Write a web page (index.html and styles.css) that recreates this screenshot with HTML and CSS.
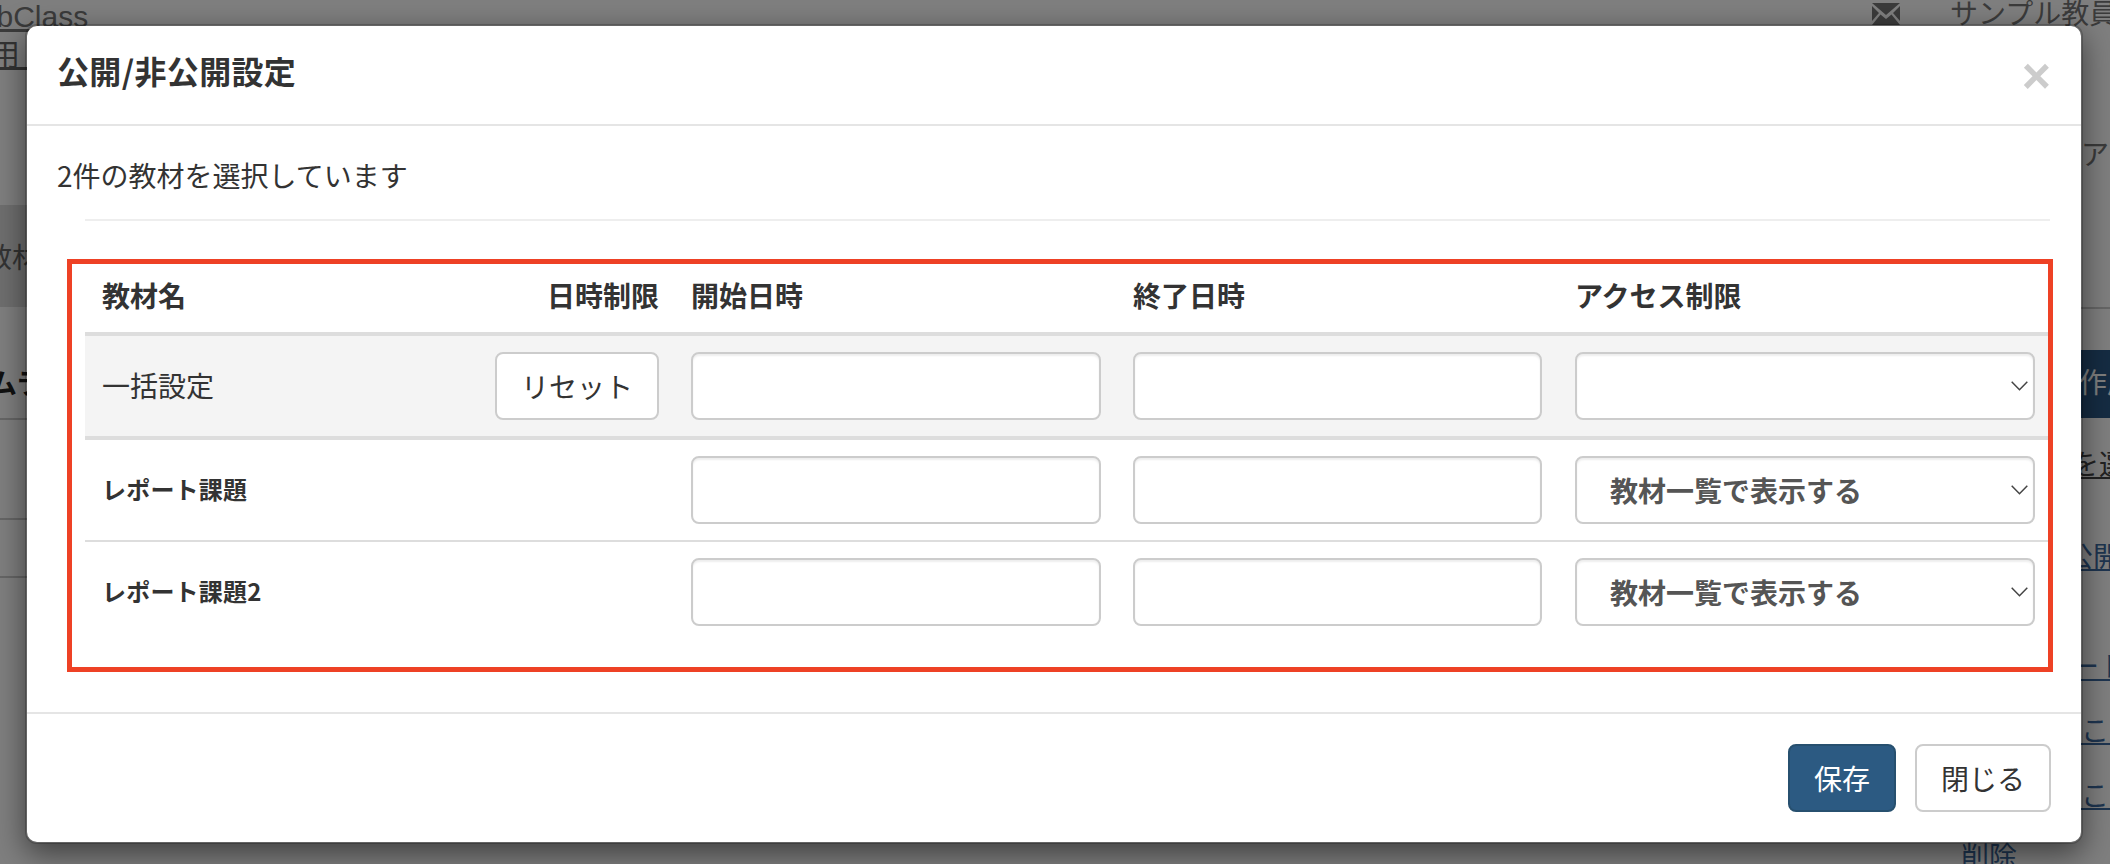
FILE: index.html
```html
<!DOCTYPE html>
<html lang="ja">
<head>
<meta charset="utf-8">
<title>公開/非公開設定</title>
<link rel="stylesheet" href="styles.css">
</head>
<body>
<div class="page">
  <header class="topbar">
    <a class="brand" href="#">WebClass</a>
    <div class="user">
      <svg class="mail" viewBox="0 0 28 22" width="28" height="22"><path d="M0 0h28L14 12z M0 3l7 7-7 8z M28 3l-7 7 7 8z M8.5 11.5L14 16l5.500-4.500L28 22H0z" fill="#777"/></svg>
      <span class="user-name">サンプル教員</span>
    </div>
  </header>
  <div class="page-main">
    <aside class="side-left">
      <a class="crumb" href="#">利用　　</a>
      <div class="band"><span>教材</span></div>
      <div class="heading-row"><strong>ムラ</strong></div>
      <div class="row-a"></div>
      <div class="row-b"></div>
    </aside>
    <aside class="side-right">
      <span class="help">ア</span>
      <div class="rule"></div>
      <div class="dark-btn">作成</div>
      <a class="pick" href="#">を選択</a>
      <a class="blue l1" href="#">公開</a>
      <a class="blue l2" href="#">ート</a>
      <a class="blue l3" href="#">こ！</a>
      <a class="blue l4" href="#">こコ</a>
    </aside>
  </div>
  <div class="page-foot"><a class="del" href="#">削除</a></div>
</div>
<div class="backdrop"></div>
<section class="modal">
  <header class="modal-head">
    <h4 class="modal-title">公開/非公開設定</h4>
    <span class="close">×</span>
  </header>
  <div class="modal-body">
    <p class="lead">2件の教材を選択しています</p>
    <hr class="sep">
    <table class="grid">
      <colgroup>
        <col class="c-name"><col class="c-lim"><col class="c-date1"><col class="c-date2"><col class="c-acc">
      </colgroup>
      <thead>
        <tr>
          <th>教材名</th>
          <th class="right">日時制限</th>
          <th class="date">開始日時</th>
          <th class="date">終了日時</th>
          <th class="acc">アクセス制限</th>
        </tr>
      </thead>
      <tbody>
        <tr class="bulk">
          <td class="name-plain">一括設定</td>
          <td class="right"><button class="btn reset" type="button">リセット</button></td>
          <td class="date"><input class="field" type="text"></td>
          <td class="date"><input class="field" type="text"></td>
          <td class="acc">
            <div class="select-wrap">
              <select class="field sel"><option></option></select>
              <svg class="chev" viewBox="0 0 17 10" width="17" height="10"><path d="M.7.7l7.800 8 7.800-8" fill="none" stroke="#444" stroke-width="1.500"/></svg>
            </div>
          </td>
        </tr>
        <tr class="mid">
          <td class="name-bold">レポート課題</td>
          <td></td>
          <td class="date"><input class="field" type="text"></td>
          <td class="date"><input class="field" type="text"></td>
          <td class="acc">
            <div class="select-wrap">
              <select class="field sel"><option>教材一覧で表示する</option></select>
              <svg class="chev" viewBox="0 0 17 10" width="17" height="10"><path d="M.7.7l7.800 8 7.800-8" fill="none" stroke="#444" stroke-width="1.500"/></svg>
            </div>
          </td>
        </tr>
        <tr>
          <td class="name-bold">レポート課題2</td>
          <td></td>
          <td class="date"><input class="field" type="text"></td>
          <td class="date"><input class="field" type="text"></td>
          <td class="acc">
            <div class="select-wrap">
              <select class="field sel"><option>教材一覧で表示する</option></select>
              <svg class="chev" viewBox="0 0 17 10" width="17" height="10"><path d="M.7.7l7.800 8 7.800-8" fill="none" stroke="#444" stroke-width="1.500"/></svg>
            </div>
          </td>
        </tr>
      </tbody>
    </table>
  </div>
  <footer class="modal-foot">
    <button class="btn primary" type="button">保存</button>
    <button class="btn closer" type="button">閉じる</button>
  </footer>
  <div class="callout"></div>
</section>
</body>
</html>
```

FILE: styles.css
```css
* { box-sizing: border-box; }
html, body { margin: 0; height: 100%; overflow: hidden; }
body {
  width: 2110px;
  height: 864px;
  position: relative;
  background: #fff;
  color: #333;
  font-family: "Liberation Sans", "Noto Sans CJK JP", sans-serif;
  font-size: 28px;
}

/* page behind the dialog */
.page { height: 864px; display: flex; flex-direction: column; overflow: hidden; }
.topbar { height: 34px; flex: none; display: flex; justify-content: space-between; }
.brand { margin-left: -48px; font-size: 30px; line-height: 34px; height: 34px; color: #777; }
.user { display: flex; align-items: flex-start; overflow: hidden; width: 238px; }
.mail { margin-top: 3px; flex: none; }
.user-name { margin-left: 50px; line-height: 30px; color: #777; white-space: nowrap; }
.page-main { flex: none; height: 810px; display: flex; justify-content: space-between; }
.side-left { width: 27px; overflow: hidden; display: flex; flex-direction: column; }
.crumb { display: block; height: 42px; font-size: 30px; line-height: 42px; margin-left: -40px; color: #666; white-space: nowrap; }
.band { margin-top: 129px; height: 102px; margin-left: -1px; background: #dedede; display: flex; align-items: center; overflow: hidden; flex: none; }
.band span { margin-left: -15px; color: #666; white-space: nowrap; }
.heading-row { height: 113px; border-bottom: 2px solid #ccc; padding-top: 60px; margin-left: -11px; white-space: nowrap; color: #222; line-height: 36px; flex: none; }
.row-a { height: 100px; border-bottom: 2px solid #ccc; flex: none; }
.row-b { height: 58px; border-bottom: 2px solid #ccc; flex: none; }
.side-right { width: 29px; overflow: hidden; display: flex; flex-direction: column; white-space: nowrap; }
.help { display: block; height: 36px; line-height: 36px; margin-top: 104px; color: #777; flex: none; }
.rule { margin-top: 133px; height: 2px; background: #ccc; flex: none; }
.dark-btn { margin-top: 41px; height: 68px; line-height: 68px; background: #2a5886; color: #fff; text-indent: -2px; flex: none; }
.pick { margin-top: 31px; margin-left: -10px; display: block; height: 34px; line-height: 34px; color: #444; flex: none; }
.blue { display: block; height: 34px; line-height: 34px; color: #3c6aa0; flex: none; }
.l1 { margin-top: 58px; margin-left: -16px; }
.l2 { margin-top: 76px; margin-left: -10px; }
.l3 { margin-top: 30px; }
.l4 { margin-top: 31px; }
.page-foot { flex: none; height: 20px; display: flex; justify-content: flex-end; padding-right: 93px; }
.del { line-height: 28px; color: #3c6aa0; text-decoration: none; }
.backdrop { position: absolute; inset: 0; background: rgba(0, 0, 0, .5); }

/* dialog */
.modal {
  position: absolute;
  left: 25px;
  top: 24px;
  width: 2058px;
  height: 820px;
  background: #fff;
  background-clip: padding-box;
  border: 2px solid rgba(0, 0, 0, .2);
  border-radius: 12px;
  box-shadow: 0 10px 30px rgba(0, 0, 0, .5);
  display: flex;
  flex-direction: column;
  font-family: "Noto Sans CJK JP", sans-serif;
}
.modal-head {
  height: 100px;
  flex: none;
  padding: 25px 30px 0 30px;
  border-bottom: 2px solid #e5e5e5;
  display: flex;
  justify-content: space-between;
  align-items: flex-start;
}
.modal-title { margin: 0; font-size: 32px; line-height: 38px; font-weight: 700; color: #333; letter-spacing: .35px; }
.close { font-family: "Liberation Sans", sans-serif; font-size: 50px; line-height: 44px; font-weight: 700; color: #ccc; margin-top: 3px; }
.modal-body { flex: none; height: 586px; padding: 29px 30px 0; }
.lead { margin: 0; line-height: 40px; font-size: 28px; color: #333; }
.sep { margin: 24px 1px 0 28px; border: 0; height: 2px; background: #eee; }
.grid {
  width: 1965px;
  margin: 41px 1px 0 28px;
  table-layout: fixed;
  border-collapse: separate;
  border-spacing: 0;
}
.c-name { width: 400px; }
.c-lim { width: 190px; }
.c-date1 { width: 442px; }
.c-date2 { width: 441px; }
.c-acc { width: 492px; }
.grid th { height: 74px; padding: 0 16px 5px; border-bottom: 4px solid #ddd; text-align: left; font-size: 28px; font-weight: 700; line-height: 36px; color: #333; }
.grid td { height: 100px; padding: 16px; line-height: 36px; vertical-align: middle; }
.grid th:first-child, .grid td:first-child { padding-left: 17px; }
.grid .right { text-align: right; padding-left: 0; padding-right: 16px; }
.grid .acc { padding-left: 17px; padding-right: 15px; }
.bulk td { background: #f4f4f4; height: 104px; border-bottom: 4px solid #ddd; }
.mid td { height: 102px; border-bottom: 2px solid #ddd; }
.grid .name-plain { font-size: 28px; color: #333; padding-bottom: 19px; }
.grid .name-bold { font-size: 24px; font-weight: 700; color: #333; padding-left: 15px; padding-bottom: 18px; letter-spacing: .2px; }
.field {
  display: block;
  width: 100%;
  height: 68px;
  background: #fff;
  border: 2px solid #ccc;
  border-radius: 8px;
  box-shadow: inset 0 2px 2px rgba(0, 0, 0, .07);
  font: inherit;
  margin: 0;
}
.select-wrap { position: relative; }
.sel {
  appearance: none;
  padding: 0 40px 0 33px;
  font-family: "Noto Sans CJK JP", sans-serif;
  font-size: 28px;
  font-weight: 700;
  color: #555;
}
.chev { position: absolute; right: 7px; top: 29px; }
.btn {
  display: inline-block;
  height: 68px;
  margin: 0;
  padding: 0;
  border: 2px solid #ccc;
  border-radius: 8px;
  background: #fff;
  color: #333;
  font-family: "Noto Sans CJK JP", sans-serif;
  font-size: 28px;
  line-height: 1;
  vertical-align: middle;
}
.reset { width: 164px; }
.modal-foot {
  flex: none;
  height: 130px;
  padding: 30px 30px 30px 0;
  border-top: 2px solid #e5e5e5;
  display: flex;
  justify-content: flex-end;
  gap: 19px;
}
.primary { width: 108px; background: #2c5a82; border-color: #27506f; color: #fff; }
.closer { width: 136px; }
.callout { position: absolute; left: 40px; top: 233px; width: 1986px; height: 413px; border: 5px solid #ee4125; pointer-events: none; }
```
